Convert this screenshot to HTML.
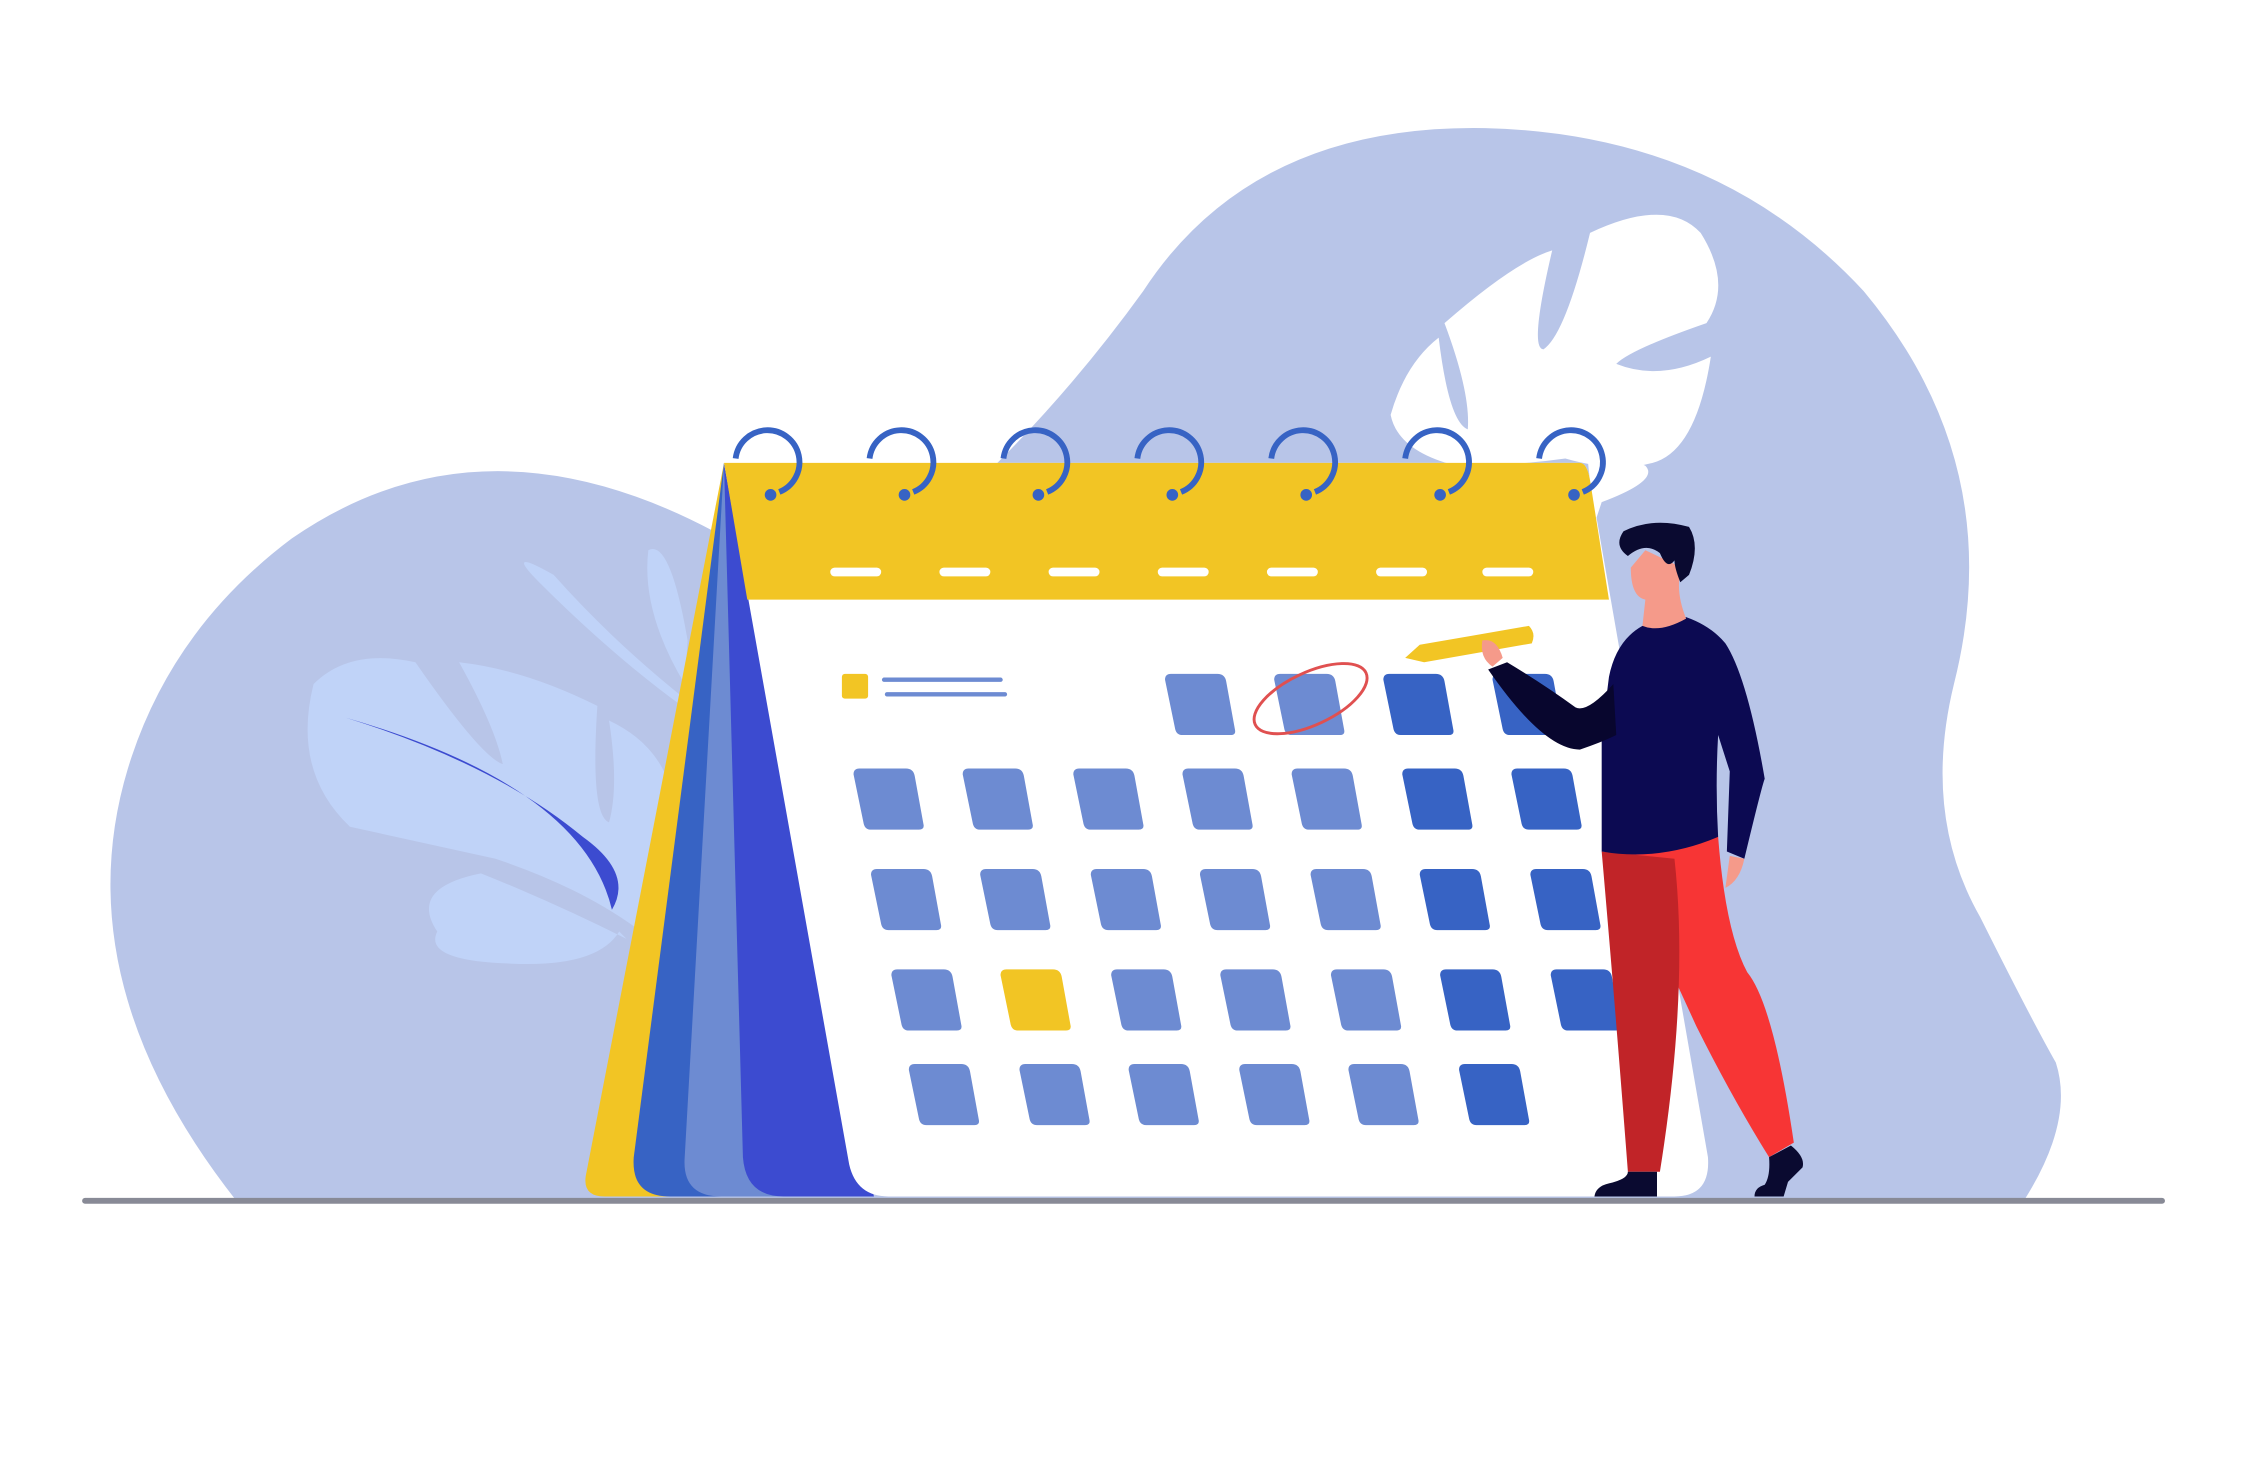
<!DOCTYPE html>
<html><head><meta charset="utf-8"><style>html,body{margin:0;padding:0;background:#fff}svg{display:block}</style></head>
<body>
<svg width="2250" height="1473" viewBox="0 0 1545 1012" xmlns="http://www.w3.org/2000/svg">
<defs>
<g id="c"><path d="M0 4 Q0 0 4 0 L36 0 Q41 0 42 5 L48 38 Q49 42 45 42 L12 42 Q8 42 7 38 Z"/></g>
</defs>
<!-- background blob -->
<path d="M162 825 Q40 670 90 520 Q120 430 200 370 Q330 280 490 365 L640 360 Q720 290 785 200 Q860 85 1020 88 Q1180 92 1280 200 Q1380 320 1342 470 Q1320 560 1360 630 Q1395 700 1412 730 Q1425 770 1390 825 Z" fill="#b8c5e8"/>
<!-- light leaf left -->
<path d="M430 645 Q380 620 330 600 Q280 610 300 640 Q290 660 350 662 Q410 665 425 640 Z" fill="#c0d3f8"/>
<path d="M470 480 Q420 440 380 395 Q345 375 370 400 Q420 450 468 485 Z" fill="#c0d3f8"/>
<path d="M470 470 Q440 420 445 378 Q460 370 472 440 Z" fill="#c0d3f8"/>
<path d="M440 640 Q400 610 340 590 L240 568 Q200 530 215 470 Q240 445 285 455 Q330 520 345 525 Q340 500 315 455 Q360 460 410 485 Q405 560 418 565 Q425 540 418 495 Q450 510 460 540 Z" fill="#c0d3f8"/>
<path d="M237 493 Q400 540 420 625 Q435 600 400 575 Q340 525 237 493 Z" fill="#3c4bd0"/>
<!-- white leaf right -->
<path d="M1000 320 Q960 310 955 285 Q965 250 988 232 Q995 290 1008 295 Q1010 270 992 222 Q1040 180 1066 172 Q1050 240 1060 240 Q1075 230 1092 160 Q1145 135 1168 160 Q1190 195 1172 222 Q1120 240 1110 250 Q1140 262 1175 245 Q1165 310 1135 318 Q1110 325 1075 315 Q1040 320 1000 320 Z" fill="#fff"/>
<path d="M1100 345 Q1140 330 1130 320 Q1110 310 1090 312 L1095 360 Z" fill="#fff"/>
<!-- ground -->
<line x1="58" y1="825" x2="1485" y2="825" stroke="#888a96" stroke-width="4" stroke-linecap="round"/>
<!-- back pages -->
<path d="M497 318 L402 808 Q400 822 415 822 L460 822 Z" fill="#f2c524"/>
<path d="M497 318 L435 795 Q433 822 460 822 L500 822 Z" fill="#3763c4"/>
<path d="M497 318 L470 795 Q468 822 495 822 L540 822 Z" fill="#6d8bd2"/>
<path d="M497 318 L510 795 Q512 822 538 822 L600 822 Z" fill="#3c4bd0"/>
<!-- main page -->
<path d="M497 318 L1085 318 Q1090 318 1092 330 L1173 795 Q1175 822 1150 822 L610 822 Q588 822 583 800 Z" fill="#fff"/>
<path d="M497 318 L1085 318 Q1090 318 1092 330 L1105 412 L513 412 Z" fill="#f2c524"/>
<g stroke="#fff" stroke-width="6" stroke-linecap="round">
<line x1="573" y1="393" x2="602" y2="393"/><line x1="648" y1="393" x2="677" y2="393"/><line x1="723" y1="393" x2="752" y2="393"/><line x1="798" y1="393" x2="827" y2="393"/><line x1="873" y1="393" x2="902" y2="393"/><line x1="948" y1="393" x2="977" y2="393"/><line x1="1021" y1="393" x2="1050" y2="393"/>
</g>
<g fill="none" stroke="#3763c4" stroke-width="4">
<path d="M505 315 A22 22 0 1 1 535 338"/><path d="M597 315 A22 22 0 1 1 627 338"/><path d="M689 315 A22 22 0 1 1 719 338"/><path d="M781 315 A22 22 0 1 1 811 338"/><path d="M873 315 A22 22 0 1 1 903 338"/><path d="M965 315 A22 22 0 1 1 995 338"/><path d="M1057 315 A22 22 0 1 1 1087 338"/>
</g>
<g fill="#3763c4"><circle cx="529" cy="340" r="4"/><circle cx="621" cy="340" r="4"/><circle cx="713" cy="340" r="4"/><circle cx="805" cy="340" r="4"/><circle cx="897" cy="340" r="4"/><circle cx="989" cy="340" r="4"/><circle cx="1081" cy="340" r="4"/></g>
<rect x="578" y="463" width="18" height="17" rx="2" fill="#f2c524"/>
<line x1="607" y1="467" x2="687" y2="467" stroke="#6d8bd2" stroke-width="3" stroke-linecap="round"/>
<line x1="609" y1="477" x2="690" y2="477" stroke="#6d8bd2" stroke-width="3" stroke-linecap="round"/>
<!-- cells -->
<g fill="#6d8bd2">
<use href="#c" x="800" y="463"/><use href="#c" x="875" y="463"/>
<use href="#c" x="586" y="528"/><use href="#c" x="661" y="528"/><use href="#c" x="737" y="528"/><use href="#c" x="812" y="528"/><use href="#c" x="887" y="528"/>
<use href="#c" x="598" y="597"/><use href="#c" x="673" y="597"/><use href="#c" x="749" y="597"/><use href="#c" x="824" y="597"/><use href="#c" x="900" y="597"/>
<use href="#c" x="612" y="666"/><use href="#c" x="763" y="666"/><use href="#c" x="838" y="666"/><use href="#c" x="914" y="666"/>
<use href="#c" x="624" y="731"/><use href="#c" x="700" y="731"/><use href="#c" x="775" y="731"/><use href="#c" x="851" y="731"/><use href="#c" x="926" y="731"/>
</g>
<g fill="#3763c4">
<use href="#c" x="950" y="463"/><use href="#c" x="1025" y="463"/>
<use href="#c" x="963" y="528"/><use href="#c" x="1038" y="528"/>
<use href="#c" x="975" y="597"/><use href="#c" x="1051" y="597"/>
<use href="#c" x="989" y="666"/><use href="#c" x="1065" y="666"/>
<use href="#c" x="1002" y="731"/>
</g>
<use href="#c" x="687" y="666" fill="#f2c524"/>
<ellipse cx="900" cy="480" rx="42" ry="18" transform="rotate(-25 900 480)" fill="none" stroke="#e05050" stroke-width="2"/>
<!-- person -->
<path d="M1105 585 L1180 575 Q1185 640 1200 668 Q1218 690 1232 785 L1215 795 Q1190 755 1165 705 Q1140 650 1110 588 Z" fill="#f73535"/>
<path d="M1100 585 L1150 590 Q1160 680 1140 805 L1118 805 Q1110 700 1100 585 Z" fill="#c12428"/>
<path d="M1118 805 L1138 805 L1138 822 L1095 822 Q1096 815 1105 813 Q1118 810 1118 805 Z" fill="#0a0a30"/>
<path d="M1215 795 L1230 787 Q1240 795 1238 802 L1228 812 L1225 822 L1205 822 Q1205 816 1212 814 Q1216 808 1215 795 Z" fill="#0a0a30"/>
<path d="M1128 430 Q1110 440 1105 465 L1100 505 L1100 585 Q1140 592 1180 575 Q1178 540 1180 505 L1188 530 L1186 585 L1198 590 Q1210 540 1212 535 Q1200 465 1185 442 Q1175 430 1158 424 Z" fill="#0c0a52"/>
<path d="M1108 470 Q1090 490 1082 486 Q1060 470 1035 455 L1022 460 Q1060 515 1085 515 Q1100 510 1110 505 Z" fill="#08062e"/>
<path d="M1188 588 L1198 590 Q1195 605 1185 610 Z" fill="#f59a8a"/>
<path d="M1120 390 L1130 378 L1155 390 Q1150 405 1158 425 Q1140 435 1128 430 L1130 412 Q1120 410 1120 390 Z" fill="#f59a8a"/>
<path d="M1115 365 Q1135 355 1160 362 Q1168 375 1160 395 L1154 400 Q1150 390 1150 385 Q1145 392 1140 380 Q1130 372 1118 382 Q1108 375 1115 365 Z" fill="#0a0a30"/>
<path d="M975 443 L1050 430 Q1055 435 1052 442 L978 455 L965 452 Z" fill="#f2c524"/>
<path d="M1018 440 Q1028 438 1032 452 L1025 458 Q1016 452 1018 440 Z" fill="#f59a8a"/>
</svg>
</body></html>
